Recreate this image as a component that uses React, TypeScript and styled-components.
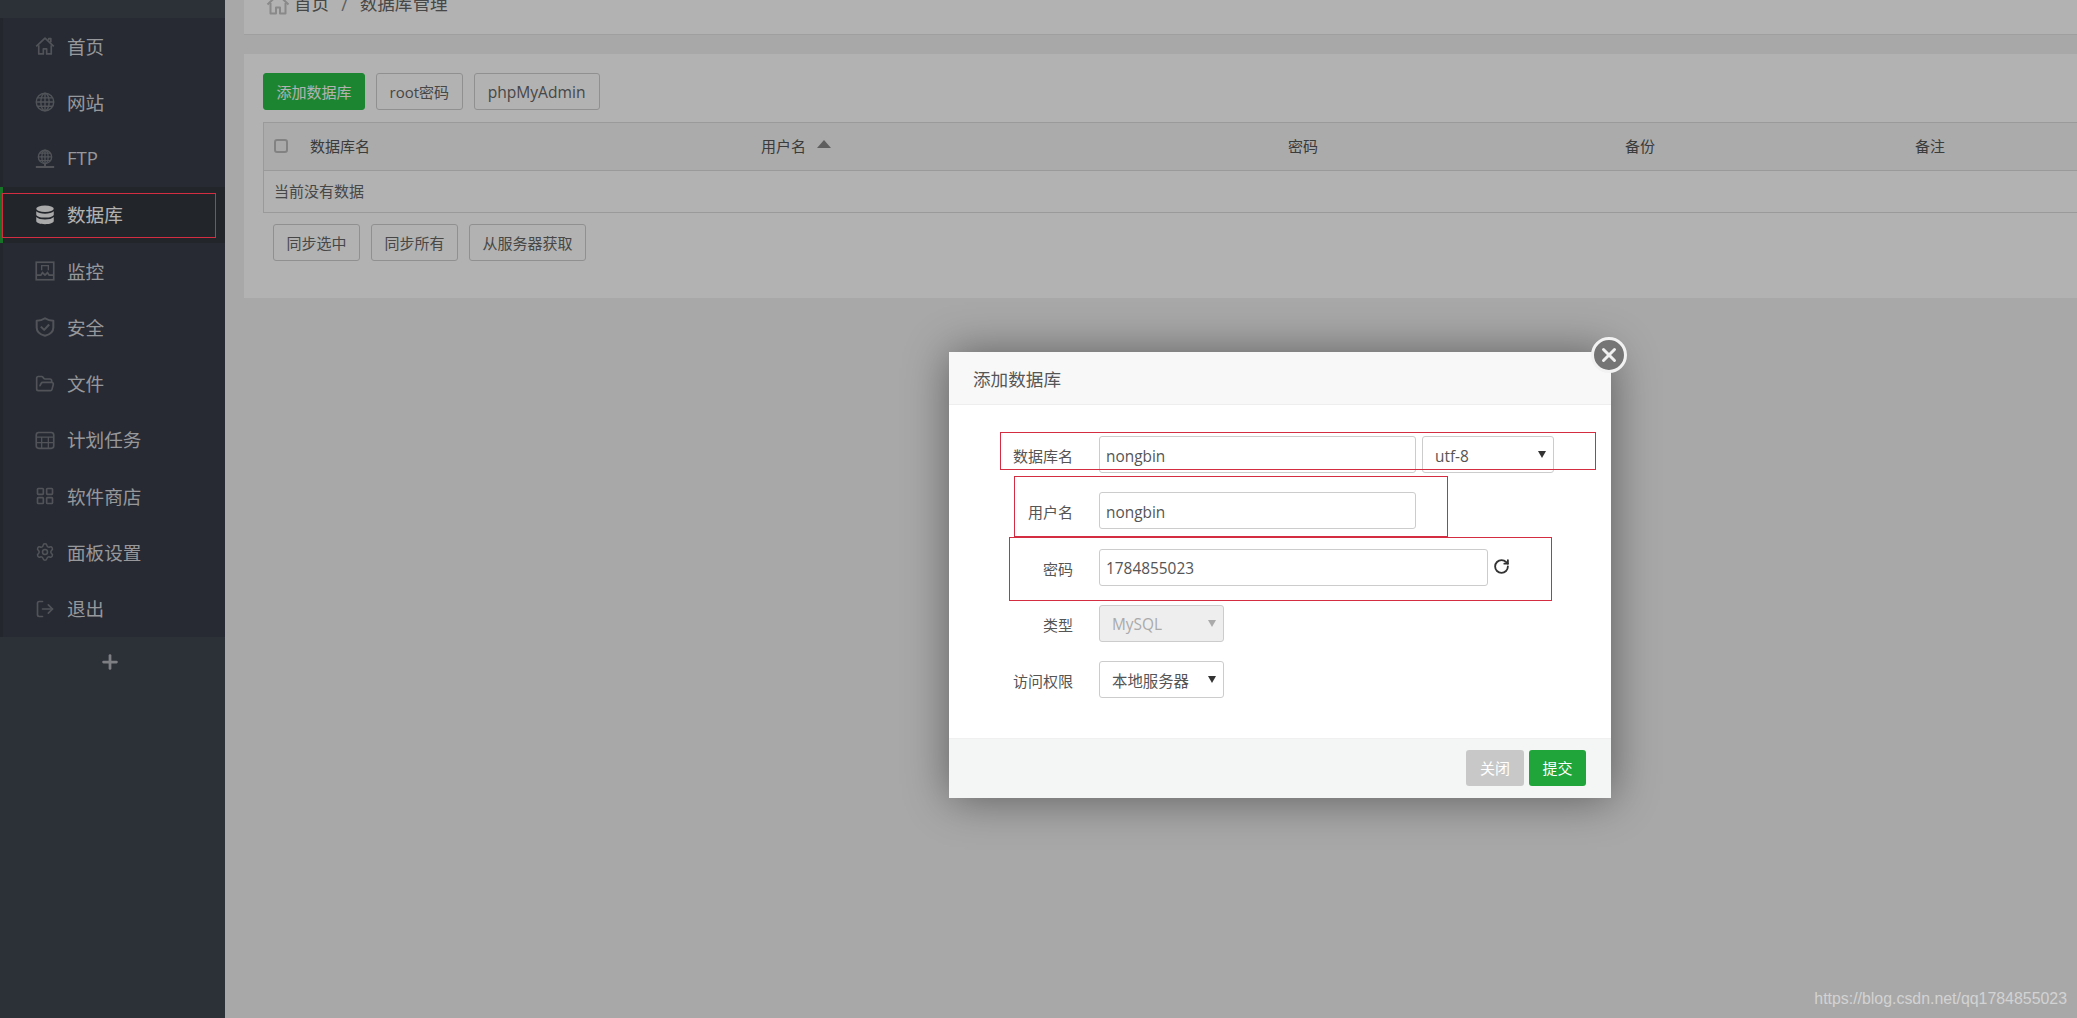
import React from 'react'
import styled, { createGlobalStyle } from 'styled-components'
import { FolderOpen, LayoutGrid, Settings, LogOut, Plus, RotateCw, X } from 'lucide-react'

const GlobalStyle = createGlobalStyle`
  html, body {
    margin: 0;
    padding: 0;
    height: 100%;
    overflow: hidden;
    background: #f1f1f1;
    font-family: "Open Sans", "Noto Sans CJK SC", sans-serif;
    font-size: 15px;
    color: #666;
  }
  * { box-sizing: border-box; }
`

const Page = styled.div`
  display: flex;
  width: 2077px;
  height: 1018px;
  overflow: hidden;
  position: relative;
`

const Sidebar = styled.aside`
  flex: 0 0 225px;
  background: #3f4550;
  padding-top: 18px;
`

const Menu = styled.ul`
  list-style: none;
  margin: 0;
  padding: 0;
  background: #383d49;
  border-left: 3px solid #33373f;
`

const MenuItem = styled.li<{ $active?: boolean }>`
  height: 56.25px;
  margin-left: -3px;
  display: flex;
  align-items: center;
  gap: 12px;
  padding-left: 35px;
  position: relative;
  font-size: 18.6px;
  color: ${props => (props.$active ? '#ffffff' : '#d8dade')};
  background: ${props => (props.$active ? '#32363d' : 'transparent')};
  border-left: ${props => (props.$active ? '3px solid #20a53a' : '3px solid transparent')};
  svg {
    margin-left: -3px;
    flex: 0 0 20px;
    color: ${props => (props.$active ? '#f4f4f4' : '#74787f')};
  }
`

const MenuLabel = styled.span`
  padding-bottom: 2px;
`

const AddRow = styled.div`
  height: 50px;
  display: flex;
  align-items: center;
  justify-content: center;
  color: #b4b7bc;
  padding-right: 5px;
`

const Main = styled.main`
  flex: 1;
  margin-top: -26px;
  padding-left: 19px;
  display: flex;
  flex-direction: column;
  gap: 19px;
`

const BreadcrumbCard = styled.div`
  height: 61px;
  background: #ffffff;
  border-bottom: 1px solid #e4e4e4;
  display: flex;
  align-items: center;
  padding-left: 22px;
  font-size: 17.6px;
  color: #666;
  svg {
    color: #c4c4c4;
    margin-right: 4px;
  }
`

const Crumb = styled.span`
  line-height: 1;
`

const CrumbSep = styled.span`
  margin: 0 12px;
  color: #888;
`

const ContentCard = styled.section`
  background: #ffffff;
  height: 244px;
  padding: 19px 0 0 19px;
`

const ButtonRow = styled.div<{ $inset?: number }>`
  display: flex;
  gap: 11px;
  margin-left: ${props => props.$inset || 0}px;
`

const Button = styled.button<{ $primary?: boolean }>`
  height: 37px;
  padding: 0 12.5px;
  border-radius: 3px;
  font: inherit;
  font-size: 15px;
  color: ${props => (props.$primary ? '#ffffff' : '#666')};
  background: ${props => (props.$primary ? '#28bf48' : '#ffffff')};
  border: 1px solid ${props => (props.$primary ? '#28bf48' : '#cfcfcf')};
`

const AdminButton = styled(Button)`
  width: 126px;
  font-size: 15.6px;
`

const Table = styled.div`
  margin: 12px 0 11px;
  border: 1px solid #ddd;
  border-right: none;
`

const TableHead = styled.div`
  height: 48px;
  background: #f5f5f5;
  border-bottom: 1px solid #ddd;
  display: grid;
  grid-template-columns: 36px 451px 527px 337px 290px 1fr;
  align-items: center;
  padding-left: 10px;
`

const HeadCell = styled.div`
  color: #555;
  display: flex;
  align-items: center;
  gap: 11px;
  padding-bottom: 2px;
`

const SortUp = styled.i`
  display: block;
  width: 0;
  height: 0;
  margin-bottom: 3px;
  border-left: 7px solid transparent;
  border-right: 7px solid transparent;
  border-bottom: 8px solid #888;
`

const CheckBox = styled.input`
  appearance: none;
  width: 14px;
  height: 14px;
  margin: 0 0 2px;
  border: 2px solid #bbb;
  border-radius: 3px;
  background: #f2f2f2;
`

const TableEmpty = styled.div`
  height: 41px;
  display: flex;
  align-items: center;
  padding: 0 0 2px 10px;
  color: #666;
`

const Overlay = styled.div`
  position: absolute;
  inset: 0;
  z-index: 1;
  background: rgba(0, 0, 0, 0.3);
`

const Modal = styled.div`
  position: absolute;
  z-index: 2;
  left: 949px;
  top: 352px;
  width: 662px;
  height: 446px;
  background: #fff;
  display: flex;
  flex-direction: column;
  box-shadow: 1px 1px 42px rgba(0, 0, 0, 0.45);
`

const ModalTitle = styled.div`
  height: 53px;
  flex: none;
  display: flex;
  align-items: center;
  padding-left: 24px;
  font-size: 17.6px;
  color: #555;
  background: #f8f8f8;
  border-bottom: 1px solid #eee;
`

const CloseButton = styled.div`
  position: absolute;
  left: 642px;
  top: -15px;
  width: 36px;
  height: 36px;
  border-radius: 50%;
  background: #757575;
  border: 3px solid #f2f2f2;
  color: #f0f0f0;
  display: flex;
  align-items: center;
  justify-content: center;
`

const ModalBody = styled.div`
  flex: 1;
  padding-top: 31px;
  display: flex;
  flex-direction: column;
  gap: 19.25px;
`

const FormRow = styled.div`
  position: relative;
  height: 37px;
  display: flex;
  align-items: center;
`

const FieldLabel = styled.label`
  flex: 0 0 124px;
  text-align: right;
  padding-top: 2px;
  margin-right: 26px;
  color: #555;
`

const TextInput = styled.input<{ $width: number }>`
  width: ${props => props.$width}px;
  height: 37px;
  padding: 3px 6px 0;
  border: 1px solid #ccc;
  border-radius: 3px;
  font: inherit;
  font-size: 15.4px;
  color: #555;
  outline: none;
`

const SelectBox = styled.div<{ $width: number; $disabled?: boolean }>`
  position: relative;
  width: ${props => props.$width}px;
  margin-left: ${props => (props.$width === 132 ? 6 : 0)}px;
  &::after {
    content: '';
    position: absolute;
    right: 8px;
    top: 15px;
    border-left: 4px solid transparent;
    border-right: 4px solid transparent;
    border-top: 7px solid ${props => (props.$disabled ? '#aaa' : '#333')};
  }
`

const Select = styled.select`
  appearance: none;
  width: 100%;
  height: 37px;
  padding: 3px 12px 0;
  border: 1px solid #ccc;
  border-radius: 3px;
  background: #fff;
  font: inherit;
  font-size: 15.4px;
  color: #555;
  &:disabled {
    background: #eee;
    color: #aaa;
    opacity: 1;
  }
`

const RefreshIcon = styled.span`
  display: flex;
  margin-left: 5px;
  margin-top: -1px;
  color: #333;
`

const ModalFooter = styled.div`
  height: 60px;
  flex: none;
  display: flex;
  justify-content: flex-end;
  gap: 5px;
  padding: 11px 25px 0 0;
  background: #f4f6f6;
  border-top: 1px solid #f0f0f0;
`

const FooterButton = styled.button<{ $primary?: boolean }>`
  height: 36px;
  width: ${props => (props.$primary ? 57 : 58)}px;
  padding: 0 0 2px;
  border: none;
  border-radius: 3px;
  font: inherit;
  font-size: 15px;
  color: #fff;
  background: ${props => (props.$primary ? '#20a53a' : '#c8c8c8')};
`

const RedBox = styled.div<{ $left: number; $top: number; $width: number; $height: number }>`
  position: absolute;
  z-index: 3;
  left: ${props => props.$left}px;
  top: ${props => props.$top}px;
  width: ${props => props.$width}px;
  height: ${props => props.$height}px;
  border: 1px solid #d42c40;
  pointer-events: none;
`

const Watermark = styled.div`
  position: absolute;
  z-index: 2;
  right: 10px;
  bottom: 10px;
  font-family: "Liberation Sans", sans-serif;
  font-size: 15.9px;
  color: rgba(255, 255, 255, 0.5);
`

const HomeIcon = ({ size = 20 }: { size?: number }) => (
  <svg width={size} height={size} viewBox="0 0 24 24" fill="none" stroke="currentColor" strokeWidth="2" strokeLinejoin="round">
    <path d="M1.500 12.500 12 2.500l10.500 10M16.500 5V3h2.500v4.500" />
    <path d="M4.500 11v10.500h5.500v-6h4v6h5.500V11" />
  </svg>
)

const GlobeIcon = () => (
  <svg width="20" height="20" viewBox="0 0 24 24" fill="none" stroke="currentColor" strokeWidth="1.700">
    <circle cx="12" cy="12" r="10.500" />
    <ellipse cx="12" cy="12" rx="5" ry="10.500" />
    <path d="M12 1.500v21M1.500 12h21M3 7h18M3 17h18" />
  </svg>
)

const FtpIcon = () => (
  <svg width="20" height="20" viewBox="0 0 24 24" fill="none" stroke="currentColor" strokeWidth="1.600">
    <circle cx="12" cy="9.500" r="8" />
    <ellipse cx="12" cy="9.500" rx="3.800" ry="8" />
    <path d="M4 9.500h16M5.500 5h13M5.500 14h13M12 1.500v16" />
    <path d="M1 21.500h22M12 17.500v4" strokeWidth="2.400" />
  </svg>
)

const DatabaseIcon = () => (
  <svg width="20" height="20" viewBox="0 0 24 24" fill="currentColor">
    <ellipse cx="12" cy="4.500" rx="10.500" ry="3.800" />
    <path d="M1.500 7.500v3.800c0 2.100 4.700 3.800 10.500 3.800s10.500-1.700 10.500-3.800V7.500c-1.700 2-5.900 3-10.500 3s-8.800-1-10.500-3z" />
    <path d="M1.500 14.500v4.800c0 2.100 4.700 3.800 10.500 3.800s10.500-1.700 10.500-3.800v-4.800c-1.700 2-5.900 3-10.500 3s-8.800-1-10.500-3z" />
  </svg>
)

const MonitorIcon = () => (
  <svg width="20" height="20" viewBox="0 0 24 24" fill="none" stroke="currentColor" strokeWidth="2">
    <rect x="1.500" y="1.500" width="21" height="21" />
    <path d="M2 17h5l2-3 3 3 3-3 2 3h5" />
    <path d="M8 11V5.500h8V11" strokeWidth="1.600" />
  </svg>
)

const ShieldIcon = () => (
  <svg width="20" height="20" viewBox="0 0 24 24" fill="none" stroke="currentColor" strokeWidth="2.400" strokeLinejoin="round">
    <path d="M12 1.500c3 2 6 3 10 3v8c0 5-4.500 8.500-10 10-5.500-1.500-10-5-10-10v-8c4 0 7-1 10-3z" />
    <path d="M7 11.500l4 4 6-6.500" />
  </svg>
)

const CalendarIcon = () => (
  <svg width="20" height="20" viewBox="0 0 24 24" fill="none" stroke="currentColor" strokeWidth="2">
    <rect x="1.500" y="3" width="21" height="19" rx="3" />
    <path d="M1.500 8.500h21M8 9v13M16 9v13M2 15h20" strokeWidth="1.500" />
  </svg>
)

const menu = [
  { label: '首页', icon: <HomeIcon /> },
  { label: '网站', icon: <GlobeIcon /> },
  { label: 'FTP', icon: <FtpIcon /> },
  { label: '数据库', icon: <DatabaseIcon />, active: true },
  { label: '监控', icon: <MonitorIcon /> },
  { label: '安全', icon: <ShieldIcon /> },
  { label: '文件', icon: <FolderOpen size={20} strokeWidth={2} /> },
  { label: '计划任务', icon: <CalendarIcon /> },
  { label: '软件商店', icon: <LayoutGrid size={20} strokeWidth={2} /> },
  { label: '面板设置', icon: <Settings size={20} strokeWidth={1.8} /> },
  { label: '退出', icon: <LogOut size={20} strokeWidth={2} /> },
]

const App = () => {
  return (
    <Page>
      <GlobalStyle />
      <Sidebar>
        <Menu>
          {menu.map(item => (
            <MenuItem key={item.label} $active={item.active}>
              {item.icon}
              <MenuLabel>{item.label}</MenuLabel>
              {item.active && <RedBox $left={-1} $top={6} $width={214} $height={45} />}
            </MenuItem>
          ))}
        </Menu>
        <AddRow>
          <Plus size={22} strokeWidth={3} />
        </AddRow>
      </Sidebar>
      <Main>
        <BreadcrumbCard>
          <HomeIcon size={24} />
          <Crumb>首页</Crumb>
          <CrumbSep>/</CrumbSep>
          <Crumb>数据库管理</Crumb>
        </BreadcrumbCard>
        <ContentCard>
          <ButtonRow>
            <Button $primary>添加数据库</Button>
            <Button>root密码</Button>
            <AdminButton>phpMyAdmin</AdminButton>
          </ButtonRow>
          <Table>
            <TableHead>
              <CheckBox type="checkbox" />
              <HeadCell>数据库名</HeadCell>
              <HeadCell>
                用户名 <SortUp />
              </HeadCell>
              <HeadCell>密码</HeadCell>
              <HeadCell>备份</HeadCell>
              <HeadCell>备注</HeadCell>
            </TableHead>
            <TableEmpty>当前没有数据</TableEmpty>
          </Table>
          <ButtonRow $inset={10}>
            <Button>同步选中</Button>
            <Button>同步所有</Button>
            <Button>从服务器获取</Button>
          </ButtonRow>
        </ContentCard>
      </Main>
      <Overlay />
      <Modal>
        <ModalTitle>添加数据库</ModalTitle>
        <CloseButton>
          <X size={22} strokeWidth={3.2} />
        </CloseButton>
        <ModalBody>
          <FormRow>
            <FieldLabel>数据库名</FieldLabel>
            <TextInput $width={317} defaultValue="nongbin" />
            <SelectBox $width={132}>
              <Select defaultValue="utf-8">
                <option>utf-8</option>
                <option>utf8mb4</option>
                <option>gbk</option>
              </Select>
            </SelectBox>
            <RedBox $left={51} $top={-4} $width={596} $height={38} />
          </FormRow>
          <FormRow>
            <FieldLabel>用户名</FieldLabel>
            <TextInput $width={317} defaultValue="nongbin" />
            <RedBox $left={65} $top={-16} $width={434} $height={61} />
          </FormRow>
          <FormRow>
            <FieldLabel>密码</FieldLabel>
            <TextInput $width={389} defaultValue="1784855023" />
            <RefreshIcon>
              <RotateCw size={17} strokeWidth={2.6} />
            </RefreshIcon>
            <RedBox $left={60} $top={-12} $width={543} $height={64} />
          </FormRow>
          <FormRow>
            <FieldLabel>类型</FieldLabel>
            <SelectBox $width={125} $disabled>
              <Select disabled defaultValue="MySQL">
                <option>MySQL</option>
              </Select>
            </SelectBox>
          </FormRow>
          <FormRow>
            <FieldLabel>访问权限</FieldLabel>
            <SelectBox $width={125}>
              <Select defaultValue="本地服务器">
                <option>本地服务器</option>
                <option>所有人</option>
              </Select>
            </SelectBox>
          </FormRow>
        </ModalBody>
        <ModalFooter>
          <FooterButton>关闭</FooterButton>
          <FooterButton $primary>提交</FooterButton>
        </ModalFooter>
      </Modal>
      <Watermark>https://blog.csdn.net/qq1784855023</Watermark>
    </Page>
  )
}

export default App
